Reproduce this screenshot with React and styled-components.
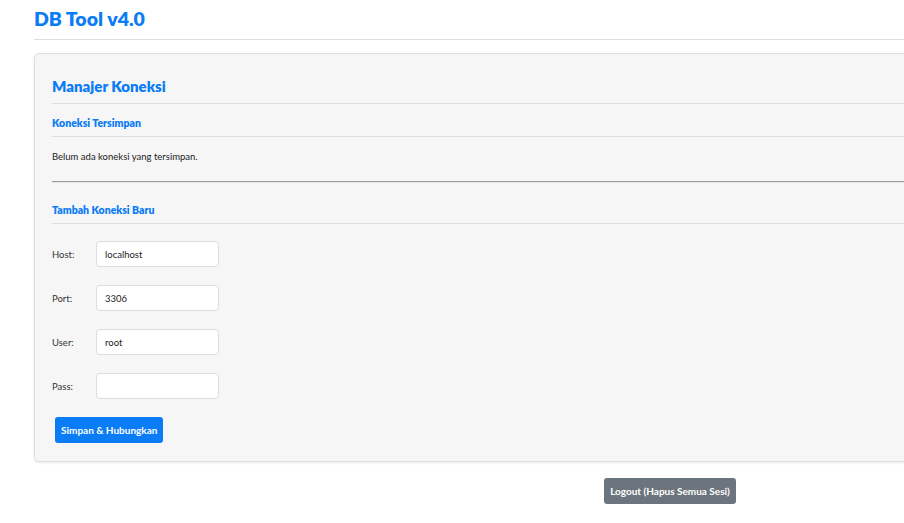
import React from 'react'
import styled, { createGlobalStyle } from 'styled-components'

const GlobalStyle = createGlobalStyle`
  body {
    margin: 0;
    background: #fff;
    font-family: Lato, 'Open Sans', sans-serif;
    color: #333;
  }
`

const fields = [
  { label: 'Host:', value: 'localhost' },
  { label: 'Port:', value: '3306' },
  { label: 'User:', value: 'root' },
  { label: 'Pass:', value: '', type: 'password' }
]

export default function App() {
  return (
    <>
      <GlobalStyle />
      <StyledPage>
        <StyledHeader>
          <StyledTitle>DB Tool v4.0</StyledTitle>
        </StyledHeader>

        <StyledCard>
          <StyledCardTitle>Manajer Koneksi</StyledCardTitle>

          <StyledSectionTitle>Koneksi Tersimpan</StyledSectionTitle>
          <StyledEmpty>Belum ada koneksi yang tersimpan.</StyledEmpty>

          <StyledDivider />

          <StyledSectionTitle $spaced>Tambah Koneksi Baru</StyledSectionTitle>
          <StyledForm>
            {fields.map((f) => (
              <StyledRow key={f.label}>
                <StyledLabel>{f.label}</StyledLabel>
                <StyledInput type={f.type || 'text'} defaultValue={f.value} />
              </StyledRow>
            ))}
            <StyledButton $variant="primary">Simpan &amp; Hubungkan</StyledButton>
          </StyledForm>
        </StyledCard>

        <StyledFooter>
          <StyledButton $variant="secondary">Logout (Hapus Semua Sesi)</StyledButton>
        </StyledFooter>
      </StyledPage>
    </>
  )
}

const StyledPage = styled.div`
  width: 1272px;
  padding: 7px 0 20px 34px;
`

const StyledHeader = styled.header`
  padding-bottom: 8px;
  border-bottom: 1px solid #ddd;
  margin-bottom: 13px;
`

const StyledTitle = styled.h1`
  margin: 0;
  font-size: 19.5px;
  line-height: 24px;
  font-weight: 800;
  color: #0a7cf5;
`

const StyledCard = styled.div`
  background: #f6f6f6;
  border: 1px solid #ddd;
  border-radius: 5px;
  box-shadow: 0 1px 3px rgba(0, 0, 0, 0.08);
  padding: 18px 17px 18px;
`

const StyledCardTitle = styled.h2`
  margin: 5px 0 0;
  padding-bottom: 8px;
  border-bottom: 1px solid #ddd;
  font-size: 15px;
  line-height: 18px;
  font-weight: 800;
  color: #0a7cf5;
`

const StyledSectionTitle = styled.h3`
  margin: ${(p) => (p.$spaced ? '20px' : '12px')} 0 0;
  padding-bottom: 6px;
  border-bottom: 1px solid #ddd;
  font-size: 10.5px;
  line-height: 14px;
  font-weight: 800;
  color: #0a7cf5;
`

const StyledEmpty = styled.p`
  margin: 13px 0 0;
  font-size: 9.5px;
  line-height: 14px;
  color: #222;
`

const StyledDivider = styled.hr`
  margin: 17px 0 0;
  border: 0;
  border-top: 1px solid #999;
  border-bottom: 1px solid #e8e8e8;
`

const StyledForm = styled.div`
  display: flex;
  flex-direction: column;
  align-items: flex-start;
  gap: 18px;
  padding-top: 17px;
`

const StyledRow = styled.div`
  display: flex;
  align-items: center;
`

const StyledLabel = styled.label`
  width: 44px;
  font-size: 9.5px;
  color: #333;
`

const StyledInput = styled.input`
  box-sizing: border-box;
  width: 123px;
  height: 26px;
  padding: 0 8px;
  border: 1px solid #ddd;
  border-radius: 4px;
  background: #fff;
  font-family: inherit;
  font-size: 9.5px;
  color: #222;
  outline: none;
`

const StyledButton = styled.button`
  height: 26px;
  padding: 0 6px;
  border: 0;
  border-radius: 3px;
  margin-left: ${(p) => (p.$variant === 'primary' ? '3px' : '0')};
  background: ${(p) => (p.$variant === 'primary' ? '#0a7cf5' : '#6c757d')};
  color: #fff;
  font-family: inherit;
  font-size: 10px;
  font-weight: 700;
  cursor: pointer;
`

const StyledFooter = styled.div`
  display: flex;
  justify-content: center;
  margin-top: 16px;
`
